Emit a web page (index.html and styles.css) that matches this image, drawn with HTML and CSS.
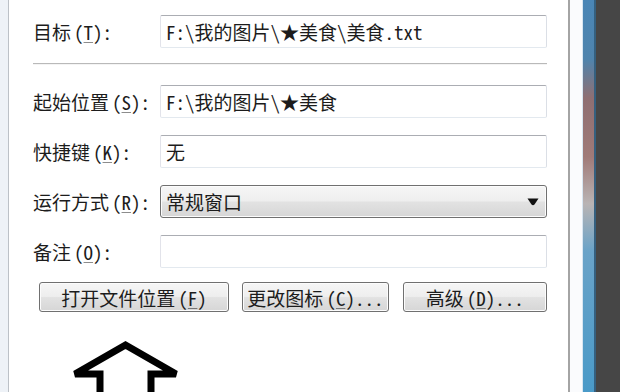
FILE: index.html
```html
<!DOCTYPE html>
<html lang="zh-CN">
<head>
  <meta charset="UTF-8">
  <meta name="viewport" content="width=device-width, initial-scale=1">
  <title>快捷方式属性</title>
  <link rel="stylesheet" href="styles.css">
</head>

<body>

  <div class="edge-left"></div>

  <div class="panel">
    <div class="field-row">
      <div class="label">目标<span class="key">(<u>T</u>)</span>:</div>
      <div class="textbox">F:\我的图片\★美食\美食.txt</div>
    </div>

    <div class="separator"></div>

    <div class="fields">
      <div class="field-row">
        <div class="label">起始位置<span class="key">(<u>S</u>)</span>:</div>
        <div class="textbox">F:\我的图片\★美食</div>
      </div>
      <div class="field-row">
        <div class="label">快捷键<span class="key">(<u>K</u>)</span>:</div>
        <div class="textbox">无</div>
      </div>
      <div class="field-row">
        <div class="label">运行方式<span class="key">(<u>R</u>)</span>:</div>
        <div class="combo">
          <span>常规窗口</span>
          <svg class="combo-arrow" width="12" height="8" viewBox="0 0 12 8">
            <path d="M0.5 0.5 H11.5 L7.5 6.5 Q6 7.8 4.5 6.5 Z" fill="#111"/>
          </svg>
        </div>
      </div>
      <div class="field-row">
        <div class="label">备注<span class="key">(<u>O</u>)</span>:</div>
        <div class="textbox"></div>
      </div>
    </div>

    <div class="buttons">
      <div class="btn btn-open">打开文件位置<span class="key">(<u>F</u>)</span></div>
      <div class="btn btn-icon">更改图标<span class="key">(<u>C</u>)</span>...</div>
      <div class="btn btn-adv">高级<span class="key">(<u>D</u>)</span>...</div>
    </div>

    <svg class="arrow" width="130" height="60" viewBox="0 0 130 60">
      <polygon points="65.5,8 15,37 40,37 40,70 91,70 91,37 116,37"
               fill="none" stroke="#000" stroke-width="7"
               stroke-linejoin="miter" stroke-miterlimit="1.6"/>
    </svg>
  </div>

  <div class="frame"></div>
  <div class="desk-strip"></div>
  <div class="desk"></div>

</body>
</html>
```

FILE: styles.css
```css
:root {
  --text-color: #1c1c1c;
  --box-border: #abadb3;
  --btn-border: #707070;
  --cjk: "Noto Sans Mono CJK SC", "Noto Sans CJK SC", "Liberation Mono", monospace;
}

* { margin: 0; padding: 0; box-sizing: border-box; }

body {
  width: 620px;
  height: 392px;
  overflow: hidden;
  display: flex;
  background: #fff;
  font-family: var(--cjk);
  font-size: 19px;
  color: var(--text-color);
}

.edge-left {
  width: 9px;
  background: #eef2f7;
  border-right: 1px solid #bcc1c7;
}

.panel {
  width: 561px;
  padding: 15px 21px 0 24px;
  border-right: 2px solid #a4a4a4;
  background: #fff;
}

.field-row {
  display: grid;
  grid-template-columns: 127px 1fr;
  align-items: center;
  height: 33px;
}

.label {
  white-space: nowrap;
  line-height: 1;
}

.key {
  margin-left: 3px;
}

.label u,
.btn u {
  text-decoration-color: rgba(0, 0, 0, 0.45);
  text-underline-offset: 2px;
}

.textbox {
  height: 33px;
  display: flex;
  align-items: center;
  padding: 0 5px;
  border: 1px solid;
  border-color: var(--box-border) #dbdfe6 #e3e9ef #e2e3ea;
  border-radius: 2px;
  background: #fff;
  white-space: nowrap;
  line-height: 1;
}

.separator {
  margin: 15px 0 20px;
  height: 2px;
  border-top: 1px solid #b9b9b9;
  border-bottom: 1px solid #f4f4f4;
}

.fields {
  display: flex;
  flex-direction: column;
  gap: 17px;
}

.combo {
  height: 33px;
  display: flex;
  align-items: center;
  justify-content: space-between;
  padding: 0 7px 0 5px;
  border: 1px solid var(--btn-border);
  border-radius: 3px;
  background: linear-gradient(#f6f6f6 0%, #eeeeee 48%, #e2e2e2 52%, #d6d6d6 100%);
  box-shadow: inset 0 0 0 1px #fcfcfc;
  line-height: 1;
}

.buttons {
  display: flex;
  margin: 14px 0 0 6px;
}

.btn {
  height: 30px;
  display: flex;
  align-items: center;
  justify-content: center;
  border: 1px solid var(--btn-border);
  border-radius: 3px;
  background: linear-gradient(#f6f6f6 0%, #eeeeee 48%, #e2e2e2 52%, #d6d6d6 100%);
  box-shadow: inset 0 0 0 1px #fcfcfc;
  line-height: 1;
  white-space: nowrap;
}

.btn-open { width: 191px; }
.btn-icon { width: 147px; margin-left: 13px; }
.btn-adv  { width: 145px; margin-left: 14px; }

.arrow {
  display: block;
  margin: 25px 0 0 27px;
}

.frame {
  width: 13px;
  background: #fafbfd;
  border-right: 1px solid #d8e6f2;
}

.desk-strip {
  width: 13px;
  background: linear-gradient(#4a86b6 0%, #4f84ad 15%, #8f6f72 25%, #a07a78 40%, #b9b4b4 52%, #6aa3c8 64%, #4a9ac8 100%);
  border-right: 2px solid #35607f;
}

.desk {
  flex: 1;
  background: #464646;
}
```
